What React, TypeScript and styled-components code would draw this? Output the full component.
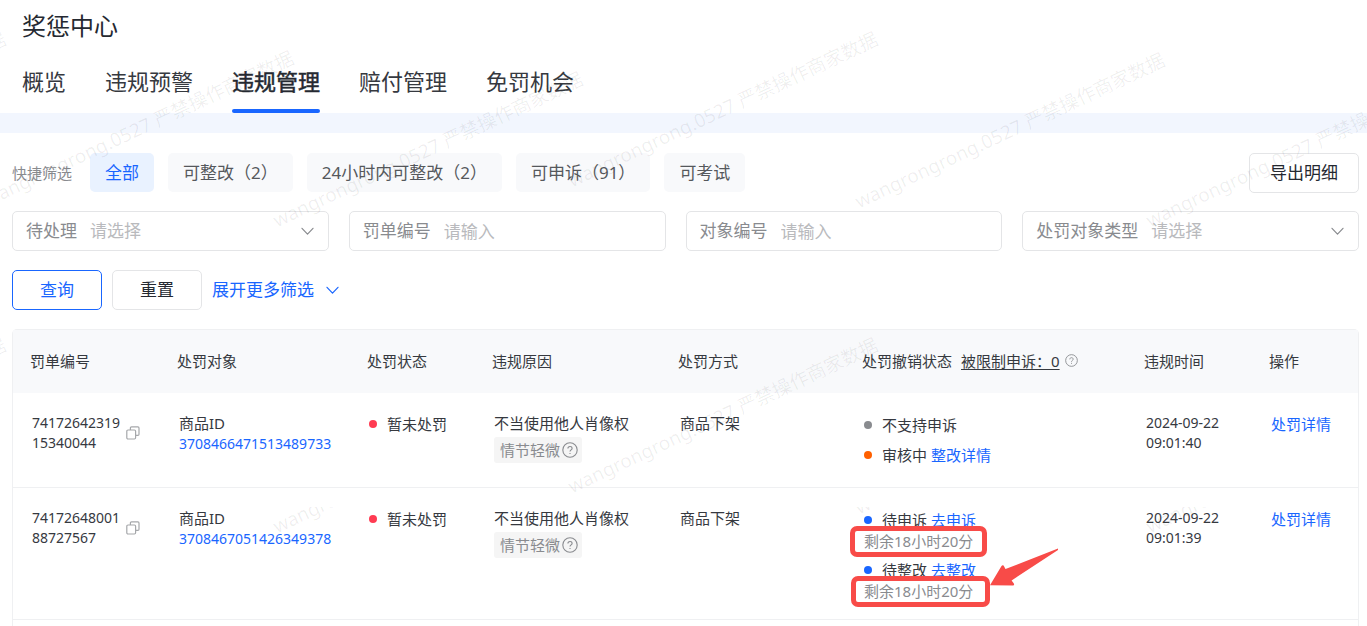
import React from "react";
import styled, { createGlobalStyle, css } from "styled-components";

const palette = {
  text: "#36393f",
  strong: "#252931",
  muted: "#898b8f",
  hint: "#b9babd",
  line: "#e4e5e7",
  faint: "#eff0f2",
  blue: "#1966ff",
  panel: "#f8f9fb",
  mark: "#f84b48",
};

const GlobalStyle = createGlobalStyle`
  *, *::before, *::after { box-sizing: border-box; }
  body {
    margin: 0;
    background: #fff;
    color: ${palette.text};
    font: 15px/20px "Noto Sans", "Noto Sans CJK SC", sans-serif;
  }
  button, input, select { font: inherit; color: inherit; margin: 0; }
`;

const Page = styled.div`
  position: relative;
  display: flex;
  flex-direction: column;
  min-height: 100vh;
  overflow: hidden;
`;

const Header = styled.header`
  padding: 10px 22px 0;
`;

const Title = styled.h1`
  margin: 0;
  font-size: 24px;
  line-height: 32px;
  font-weight: 400;
  color: ${palette.strong};
`;

const Tabs = styled.nav`
  display: flex;
  gap: 39px;
  padding-top: 24px;
`;

const Tab = styled.button<{ $active?: boolean }>`
  position: relative;
  padding: 0 0 17px;
  border: 0;
  background: none;
  font-size: 22px;
  line-height: 30px;
  color: ${(p) => (p.$active ? palette.strong : palette.text)};
  ${(p) =>
    p.$active &&
    css`
      -webkit-text-stroke: 0.5px ${palette.strong};
      &::after {
        content: "";
        position: absolute;
        inset: auto 0 0;
        height: 4px;
        border-radius: 2px;
        background: ${palette.blue};
      }
    `}
`;

const Band = styled.div`
  height: 20px;
  background: #f2f6fe;
`;

const Main = styled.main`
  flex: 1;
  display: flex;
  flex-direction: column;
  gap: 19px;
  padding: 20px 8px 0 12px;
`;

const QuickRow = styled.div`
  display: flex;
  align-items: center;
  gap: 14px;
  height: 39px;
`;

const QuickLabel = styled.span`
  margin-right: 4px;
  color: ${palette.muted};
`;

const Chip = styled.button<{ $active?: boolean }>`
  height: 39px;
  padding: 0 15px;
  border: 0;
  border-radius: 5px;
  font-size: 17px;
  white-space: nowrap;
  color: ${(p) => (p.$active ? palette.blue : "#55585c")};
  background: ${(p) => (p.$active ? "#e9f2ff" : palette.panel)};
`;

const Button = styled.button<{ $primary?: boolean; $wide?: boolean }>`
  width: ${(p) => (p.$wide ? 110 : 90)}px;
  height: 40px;
  padding: 0;
  border: 1px solid ${(p) => (p.$primary ? palette.blue : palette.line)};
  border-radius: 5px;
  background: #fff;
  font-size: 17px;
  color: ${(p) => (p.$primary ? palette.blue : palette.strong)};
`;

const ExportButton = styled(Button)`
  margin-left: auto;
`;

const Filters = styled.form`
  display: grid;
  grid-template-columns: repeat(4, minmax(0, 1fr));
`;

const Field = styled.label`
  display: flex;
  align-items: center;
  gap: 13px;
  height: 40px;
  margin-right: 20px;
  padding: 0 14px 0 13px;
  border: 1px solid ${palette.line};
  border-radius: 5px;
  font-size: 17px;
  color: ${palette.muted};
  white-space: nowrap;
  &:last-child {
    margin-right: 0;
  }
`;

const control = css`
  flex: 1;
  min-width: 0;
  height: 24px;
  padding: 0;
  border: 0;
  outline: 0;
  background: none;
  color: ${palette.hint};
`;

const TextInput = styled.input`
  ${control}
  &::placeholder {
    color: ${palette.hint};
  }
`;

const Select = styled.select`
  ${control}
  appearance: none;
`;

const Actions = styled.div`
  display: flex;
  align-items: center;
  gap: 10px;
`;

const MoreButton = styled.button`
  display: flex;
  align-items: center;
  gap: 12px;
  padding: 0;
  border: 0;
  background: none;
  font-size: 17px;
  color: ${palette.blue};
`;

const TableFrame = styled.div`
  flex: 1;
  border: 1px solid ${palette.faint};
  border-bottom: 0;
  border-radius: 5px 5px 0 0;
`;

const Table = styled.table`
  width: 100%;
  table-layout: fixed;
  border-collapse: separate;
  border-spacing: 0;
`;

const Th = styled.th`
  height: 63px;
  padding: 0 0 2px 17px;
  background: ${palette.panel};
  text-align: left;
  font-weight: 400;
  white-space: nowrap;
`;

const Td = styled.td`
  height: 95px;
  padding: 20px 0 18px 19px;
  border-bottom: 1px solid ${palette.faint};
  vertical-align: top;
  white-space: nowrap;
`;

const Limit = styled.span`
  margin: 0 5px 0 9px;
  text-decoration: underline;
  text-underline-offset: 2px;
`;

const TicketCell = styled.div`
  display: flex;
  align-items: center;
  gap: 6px;
`;

const Digits = styled.div`
  font-size: 14px;
`;

const IconButton = styled.button`
  display: flex;
  padding: 0;
  border: 0;
  background: none;
  color: #a5a7aa;
`;

const Link = styled.a<{ $digits?: boolean }>`
  color: ${palette.blue};
  font-size: ${(p) => (p.$digits ? 14 : 15)}px;
  line-height: 22px;
  text-decoration: none;
`;

const Tag = styled.div`
  display: inline-flex;
  align-items: center;
  gap: 2px;
  height: 26px;
  margin-top: 4px;
  padding: 0 4px 0 6px;
  border-radius: 3px;
  background: #f5f5f5;
  color: ${palette.muted};
`;

const StateList = styled.div`
  position: relative;
  display: grid;
  gap: 8px;
  padding-top: 1px;
`;

const State = styled.div`
  display: flex;
  align-items: center;
  line-height: 22px;
`;

const Dot = styled.i<{ $color: string }>`
  width: 8px;
  height: 8px;
  margin-right: 10px;
  border-radius: 50%;
  background: ${(p) => p.$color};
`;

const StateText = styled.span`
  margin-right: 4px;
`;

const Remaining = styled.div`
  position: relative;
  width: max-content;
  color: ${palette.muted};
`;

const MarkBox = styled.i<{ $shift?: boolean }>`
  position: absolute;
  top: -5px;
  left: ${(p) => (p.$shift ? -13 : -14)}px;
  width: ${(p) => (p.$shift ? 139 : 137)}px;
  height: 31px;
  border: 5px solid ${palette.mark};
  border-radius: 7px;
`;

const Arrow = styled.svg`
  position: absolute;
  left: 124px;
  top: 39px;
`;

const WatermarkLayer = styled.div<{ $top: number }>`
  position: absolute;
  inset: ${(p) => p.$top}px 0 0;
  overflow: hidden;
  pointer-events: none;
`;

const Watermark = styled.span`
  position: absolute;
  font-size: 19px;
  line-height: 24px;
  white-space: nowrap;
  color: rgba(0, 0, 0, 0.065);
  transform: translateY(-100%) rotate(-25deg);
  transform-origin: 0 100%;
`;

const Chevron = () => (
  <svg width="13" height="9" viewBox="0 0 13 9" fill="none" stroke="currentColor" strokeWidth="1.2" strokeLinecap="round" strokeLinejoin="round" aria-hidden="true">
    <path d="M1 1.3 6.5 7.2 12 1.3" />
  </svg>
);

const Copy = () => (
  <svg width="14" height="14" viewBox="0 0 14 14" fill="none" stroke="currentColor" strokeWidth="1.2" strokeLinejoin="round" aria-hidden="true">
    <rect x="0.8" y="4" width="8.8" height="9" rx="1.2" />
    <path d="M4.4 4V1.9c0-.7.4-1.1 1.1-1.1h6.4c.7 0 1.1.4 1.1 1.1v6.4c0 .7-.4 1.1-1.1 1.1H9.7" />
  </svg>
);

const Question = ({ size }: { size: number }) => (
  <svg width={size} height={size} viewBox="0 0 16 16" fill="none" stroke="currentColor" strokeWidth="1.1" aria-hidden="true">
    <circle cx="8" cy="8" r="7.2" />
    <path d="M5.9 6.6c0-1.3.9-2.1 2.1-2.1s2.1.8 2.1 1.9c0 1.4-2.1 1.6-2.1 3.1" />
    <path d="M8 10.9v1.2" />
  </svg>
);

const HelpIcon = styled.span`
  display: inline-block;
  height: 13px;
  color: ${palette.muted};
  line-height: 0;
`;

const tabs = ["概览", "违规预警", "违规管理", "赔付管理", "免罚机会"];
const chips = ["全部", "可整改（2）", "24小时内可整改（2）", "可申诉（91）", "可考试"];
const columnWidths = [147, 190, 125, 186, 184, 282, 125, 106];

const fields = [
  { label: "待处理", select: true },
  { label: "罚单编号", select: false },
  { label: "对象编号", select: false },
  { label: "处罚对象类型", select: true },
];

type StateItem = { color: string; text: string; link?: string; remaining?: string };

const rows: { id: [string, string]; product: string; time: [string, string]; states: StateItem[] }[] = [
  {
    id: ["74172642319", "15340044"],
    product: "3708466471513489733",
    time: ["2024-09-22", "09:01:40"],
    states: [
      { color: "#898b8f", text: "不支持申诉" },
      { color: "#ff6000", text: "审核中", link: "整改详情" },
    ],
  },
  {
    id: ["74172648001", "88727567"],
    product: "3708467051426349378",
    time: ["2024-09-22", "09:01:39"],
    states: [
      { color: palette.blue, text: "待申诉", link: "去申诉", remaining: "剩余18小时20分" },
      { color: palette.blue, text: "待整改", link: "去整改", remaining: "剩余18小时20分" },
    ],
  },
];

const watermarkText = "wangrongrong.0527 严禁操作商家数据";
const fullMarks = [
  [-298, 192], [-10, 211], [279, 232], [574, 192], [861, 213], [1152, 232], [-298, 498], [574, 498],
];
const lowerMarks = [[279, 31], [861, 12], [1152, 31]];

export default function App() {
  return (
    <Page>
      <GlobalStyle />
      <Header>
        <Title>奖惩中心</Title>
        <Tabs>
          {tabs.map((t) => (
            <Tab key={t} type="button" $active={t === "违规管理"}>{t}</Tab>
          ))}
        </Tabs>
      </Header>
      <Band />
      <Main>
        <QuickRow>
          <QuickLabel>快捷筛选</QuickLabel>
          {chips.map((c, i) => (
            <Chip key={c} type="button" $active={i === 0}>{c}</Chip>
          ))}
          <ExportButton type="button" $wide>导出明细</ExportButton>
        </QuickRow>
        <Filters>
          {fields.map((f) => (
            <Field key={f.label}>
              {f.label}
              {f.select ? (
                <>
                  <Select defaultValue=""><option value="">请选择</option></Select>
                  <Chevron />
                </>
              ) : (
                <TextInput placeholder="请输入" />
              )}
            </Field>
          ))}
        </Filters>
        <Actions>
          <Button type="button" $primary>查询</Button>
          <Button type="button">重置</Button>
          <MoreButton type="button">展开更多筛选<Chevron /></MoreButton>
        </Actions>
        <TableFrame>
          <Table>
            <colgroup>
              {columnWidths.map((w, i) => <col key={i} style={{ width: w }} />)}
            </colgroup>
            <thead>
              <tr>
                <Th>罚单编号</Th>
                <Th>处罚对象</Th>
                <Th>处罚状态</Th>
                <Th>违规原因</Th>
                <Th>处罚方式</Th>
                <Th>处罚撤销状态<Limit>被限制申诉：0</Limit><HelpIcon><Question size={13} /></HelpIcon></Th>
                <Th>违规时间</Th>
                <Th>操作</Th>
              </tr>
            </thead>
            <tbody>
              {rows.map((r) => (
                <tr key={r.product}>
                  <Td>
                    <TicketCell>
                      <Digits>{r.id[0]}<br />{r.id[1]}</Digits>
                      <IconButton type="button" aria-label="复制"><Copy /></IconButton>
                    </TicketCell>
                  </Td>
                  <Td>
                    <div>商品ID</div>
                    <Link href="#" $digits>{r.product}</Link>
                  </Td>
                  <Td><State><Dot $color="#ff3b52" />暂未处罚</State></Td>
                  <Td>
                    <div>不当使用他人肖像权</div>
                    <Tag>情节轻微<Question size={16} /></Tag>
                  </Td>
                  <Td>商品下架</Td>
                  <Td>
                    <StateList>
                      {r.states.map((s, i) => (
                        <div key={s.text}>
                          <State>
                            <Dot $color={s.color} />
                            <StateText>{s.text}</StateText>
                            {s.link && <Link href="#">{s.link}</Link>}
                          </State>
                          {s.remaining && <Remaining>{s.remaining}<MarkBox $shift={i === 1} /></Remaining>}
                        </div>
                      ))}
                      {r.states[0].remaining && (
                        <Arrow width="72" height="42" viewBox="0 0 72 42" fill={palette.mark} aria-hidden="true">
                          <path d="M70 1.6 17.5 22 15.600 18.6Q14.500 17.500 13.500 19L2 38.300 25 38.500Q27 38 25.500 36L23.600 33.500 70 3Z" />
                        </Arrow>
                      )}
                    </StateList>
                  </Td>
                  <Td><Digits>{r.time[0]}<br />{r.time[1]}</Digits></Td>
                  <Td><Link href="#">处罚详情</Link></Td>
                </tr>
              ))}
            </tbody>
          </Table>
        </TableFrame>
      </Main>
      <WatermarkLayer $top={0} aria-hidden="true">
        {fullMarks.map(([x, y]) => (
          <Watermark key={`${x},${y}`} style={{ left: x, top: y }}>{watermarkText}</Watermark>
        ))}
      </WatermarkLayer>
      <WatermarkLayer $top={507} aria-hidden="true">
        {lowerMarks.map(([x, y]) => (
          <Watermark key={x} style={{ left: x, top: y }}>{watermarkText}</Watermark>
        ))}
      </WatermarkLayer>
    </Page>
  );
}
